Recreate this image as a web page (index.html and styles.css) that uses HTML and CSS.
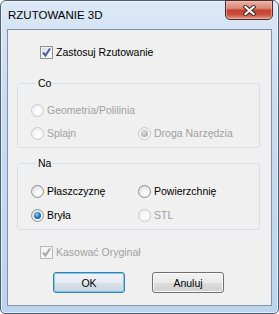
FILE: index.html
```html
<!DOCTYPE html>
<html lang="pl">
<head>
<meta charset="utf-8">
<title>RZUTOWANIE 3D</title>
<link rel="stylesheet" href="styles.css">
</head>
<body>
<div class="window">
  <div class="titlebar">
    <span class="title">RZUTOWANIE 3D</span>
    <button class="close" aria-label="Zamknij">
      <svg width="13" height="11" viewBox="0 0 13 11">
        <path d="M2.5 2 L10.5 9 M10.5 2 L2.5 9" stroke="#3b2320" stroke-width="4" stroke-linecap="square" fill="none"/>
        <path d="M2.5 2 L10.5 9 M10.5 2 L2.5 9" stroke="#ffffff" stroke-width="2.2" stroke-linecap="square" fill="none"/>
      </svg>
    </button>
  </div>
  <div class="client">
    <div class="check-row first">
      <span class="checkbox">
        <svg class="tick" width="11" height="11" viewBox="0 0 11 11"><path d="M2 5.5 L4.5 8.5 L9 1.5" stroke="#4a5f97" stroke-width="2" fill="none"/></svg>
      </span>
      <span class="label">Zastosuj Rzutowanie</span>
    </div>

    <fieldset class="group co">
      <legend>Co</legend>
      <div class="grid">
        <div class="option disabled"><span class="radio"></span><span class="label">Geometria/Polilinia</span></div>
        <div></div>
        <div class="option disabled"><span class="radio"></span><span class="label">Splajn</span></div>
        <div class="option disabled"><span class="radio selected"></span><span class="label">Droga Narzędzia</span></div>
      </div>
    </fieldset>

    <fieldset class="group na">
      <legend>Na</legend>
      <div class="grid">
        <div class="option"><span class="radio"></span><span class="label">Płaszczyznę</span></div>
        <div class="option"><span class="radio"></span><span class="label">Powierzchnię</span></div>
        <div class="option"><span class="radio selected"></span><span class="label">Bryła</span></div>
        <div class="option disabled"><span class="radio"></span><span class="label">STL</span></div>
      </div>
    </fieldset>

    <div class="check-row second disabled">
      <span class="checkbox">
        <svg class="tick" width="11" height="11" viewBox="0 0 11 11"><path d="M2 5.5 L4.5 8.5 L9 1.5" stroke="#a8a8a8" stroke-width="2" fill="none"/></svg>
      </span>
      <span class="label">Kasować Oryginał</span>
    </div>

    <div class="buttons">
      <button class="btn default">OK</button>
      <button class="btn">Anuluj</button>
    </div>
  </div>
</div>
</body>
</html>
```

FILE: styles.css
```css
html, body {
  margin: 0;
  padding: 0;
  background: #ffffff;
}

body {
  font-family: "Liberation Sans", Arial, sans-serif;
  font-size: 10.5px;
  color: #000000;
}

.window {
  width: 279px;
  height: 314px;
  box-sizing: border-box;
  border: 1px solid #4e6178;
  border-radius: 6px 6px 5px 5px;
  background: linear-gradient(#dbe8f7, #c9dcf1 30%, #bcd4ee);
  box-shadow: inset 0 0 0 1px rgba(255, 255, 255, 0.55);
  padding: 0 6px 7px 6px;
  display: flex;
  flex-direction: column;
}

.titlebar {
  height: 28px;
  flex: none;
  display: flex;
  justify-content: space-between;
  align-items: flex-start;
}

.title {
  margin-top: 8px;
  padding-left: 1px;
  font-size: 11.5px;
  line-height: 13px;
  color: #000000;
}

.close {
  width: 48px;
  height: 20px;
  margin-top: -1px;
  margin-right: -1px;
  padding: 0;
  border: 1px solid #4b2b25;
  border-radius: 0 0 5px 5px;
  background: linear-gradient(#eab2a5, #da8877 40%, #c5412f 52%, #c9503d 75%, #e19984);
  box-shadow: inset 0 0 0 1px rgba(255, 210, 200, 0.45);
  display: flex;
  align-items: center;
  justify-content: center;
}

.close svg {
  display: block;
}

.client {
  flex: 1;
  border: 1px solid #7f93aa;
  background: #f0f0f0;
  padding: 0 11px 0 9px;
  display: flex;
  flex-direction: column;
}

.label {
  line-height: 13px;
  white-space: nowrap;
}

.check-row {
  height: 13px;
  display: flex;
  align-items: center;
  gap: 3px;
  padding-left: 23px;
}

.check-row.first {
  margin-top: 16px;
}

.check-row.second {
  margin-top: 16px;
}

.checkbox {
  width: 13px;
  height: 13px;
  box-sizing: border-box;
  border: 1px solid #8e8f8f;
  background: linear-gradient(135deg, #d9dde2, #ffffff);
  box-shadow: inset 0 0 0 1px #f4f4f4;
  flex: none;
  display: flex;
  align-items: center;
  justify-content: center;
}

.tick {
  display: block;
}

.disabled .label {
  color: #a0a0a0;
}

.disabled .checkbox {
  border-color: #b8b8b8;
  background: #f4f4f4;
  box-shadow: none;
}

.group {
  margin: 0;
  border: 1px solid #d5dfe5;
  border-radius: 3px;
  padding: 0 0 0 13px;
}

.group legend {
  padding: 0 2px;
  margin-left: 5px;
  line-height: 12px;
  font-size: 10.5px;
}

.group.co {
  margin-top: 18px;
  padding-top: 15px;
  padding-bottom: 7px;
}

.group.na {
  margin-top: 9px;
  padding-top: 16px;
  padding-bottom: 7px;
}

.grid {
  display: grid;
  grid-template-columns: 107px 1fr;
  grid-auto-rows: 13px;
}

.co .grid {
  row-gap: 10px;
}

.na .grid {
  row-gap: 11px;
}

.option {
  display: flex;
  align-items: center;
  gap: 3px;
}

.radio {
  width: 13px;
  height: 13px;
  box-sizing: border-box;
  border-radius: 50%;
  border: 1px solid #8e8f8f;
  background: radial-gradient(circle at 60% 65%, #ffffff 0%, #f0f0f0 45%, #d4d4d4 100%);
  flex: none;
  display: flex;
  align-items: center;
  justify-content: center;
}

.radio.selected::after {
  content: "";
  width: 7px;
  height: 7px;
  border-radius: 50%;
  background: radial-gradient(circle at 40% 35%, #8fd0f7 0%, #2f7bc6 45%, #0f3e77 100%);
}

.disabled .radio {
  border-color: #c9c9c9;
  background: radial-gradient(circle at 60% 65%, #ffffff 0%, #f6f6f6 50%, #e6e6e6 100%);
}

.disabled .radio.selected::after {
  background: radial-gradient(circle at 40% 35%, #e4e4e4 0%, #b8b8b8 55%, #9a9a9a 100%);
}

.buttons {
  margin-top: 13px;
  display: flex;
  gap: 27px;
  padding-left: 36px;
}

.btn {
  width: 72px;
  height: 21px;
  box-sizing: border-box;
  padding: 0;
  border: 1px solid #707070;
  border-radius: 3px;
  font-family: "Liberation Sans", Arial, sans-serif;
  font-size: 10.5px;
  color: #000000;
  background: linear-gradient(#f2f2f2 0%, #ebebeb 50%, #dddddd 51%, #cfcfcf 100%);
  box-shadow: inset 0 0 0 1px #fcfcfc;
}

.btn.default {
  border-color: #3c7fb1;
  background: linear-gradient(#eef3f7 0%, #e6ecf1 50%, #d8e1e8 51%, #ccd6de 100%);
  box-shadow: inset 0 0 0 1px #7cc8f0;
}
```
